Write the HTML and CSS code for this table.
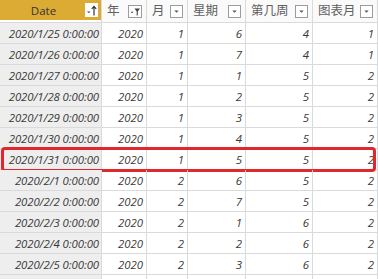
FILE: index.html
```html
<!DOCTYPE html>
<html lang="zh">
<head>
<meta charset="utf-8">
<link rel="stylesheet" href="styles.css">
</head>
<body>
<div class="table">
  <div class="row head">
    <div class="cell hd sel">
      <div class="hd-fill">
        <span class="hd-label">Date</span>
        <svg class="ico sort" width="13" height="14" viewBox="0 0 13 14">
          <rect x="0" y="0" width="13" height="14" fill="#fff"/>
          <path d="M2 8.5 H5.5 L3.75 10 Z" fill="#333"/>
          <path d="M9 12.5 V3.5 M6.8 5.8 L9 3.3 L11.2 5.8" stroke="#333" stroke-width="1.2" fill="none"/>
        </svg>
      </div>
    </div>
    <div class="cell hd"><span class="hd-text">年</span>
      <svg class="ico" width="14" height="13" viewBox="0 0 14 13">
        <rect x="0.5" y="0.5" width="13" height="12" fill="#fff" stroke="#9c9c9c"/>
        <path d="M2.5 6.8 H5.5 L4 8.3 Z" fill="#444"/>
        <path d="M6.5 3.5 H12 L9.8 6.5 V10.2 L8.7 10.8 V6.5 Z" fill="#444"/>
      </svg>
    </div>
    <div class="cell hd"><span class="hd-text">月</span>
      <svg class="ico" width="13" height="13" viewBox="0 0 13 13">
        <rect x="0.5" y="0.5" width="12" height="12" fill="#fff" stroke="#9c9c9c"/>
        <path d="M4.3 5.5 H8.7 L6.5 7.8 Z" fill="#555"/>
      </svg>
    </div>
    <div class="cell hd"><span class="hd-text">星期</span>
      <svg class="ico" width="13" height="13" viewBox="0 0 13 13">
        <rect x="0.5" y="0.5" width="12" height="12" fill="#fff" stroke="#9c9c9c"/>
        <path d="M4.3 5.5 H8.7 L6.5 7.8 Z" fill="#555"/>
      </svg>
    </div>
    <div class="cell hd"><span class="hd-text">第几周</span>
      <svg class="ico" width="13" height="13" viewBox="0 0 13 13">
        <rect x="0.5" y="0.5" width="12" height="12" fill="#fff" stroke="#9c9c9c"/>
        <path d="M4.3 5.5 H8.7 L6.5 7.8 Z" fill="#555"/>
      </svg>
    </div>
    <div class="cell hd"><span class="hd-text">图表月</span>
      <svg class="ico" width="13" height="13" viewBox="0 0 13 13">
        <rect x="0.5" y="0.5" width="12" height="12" fill="#fff" stroke="#9c9c9c"/>
        <path d="M4.3 5.5 H8.7 L6.5 7.8 Z" fill="#555"/>
      </svg>
    </div>
  </div>

  <div class="row"><div class="cell d">2020/1/25 0:00:00</div><div class="cell">2020</div><div class="cell">1</div><div class="cell">6</div><div class="cell">4</div><div class="cell">1</div></div>
  <div class="row"><div class="cell d">2020/1/26 0:00:00</div><div class="cell">2020</div><div class="cell">1</div><div class="cell">7</div><div class="cell">4</div><div class="cell">1</div></div>
  <div class="row"><div class="cell d">2020/1/27 0:00:00</div><div class="cell">2020</div><div class="cell">1</div><div class="cell">1</div><div class="cell">5</div><div class="cell">2</div></div>
  <div class="row"><div class="cell d">2020/1/28 0:00:00</div><div class="cell">2020</div><div class="cell">1</div><div class="cell">2</div><div class="cell">5</div><div class="cell">2</div></div>
  <div class="row"><div class="cell d">2020/1/29 0:00:00</div><div class="cell">2020</div><div class="cell">1</div><div class="cell">3</div><div class="cell">5</div><div class="cell">2</div></div>
  <div class="row"><div class="cell d">2020/1/30 0:00:00</div><div class="cell">2020</div><div class="cell">1</div><div class="cell">4</div><div class="cell">5</div><div class="cell">2</div></div>
  <div class="row hl"><div class="cell d">2020/1/31 0:00:00</div><div class="cell">2020</div><div class="cell">1</div><div class="cell">5</div><div class="cell">5</div><div class="cell">2</div></div>
  <div class="row"><div class="cell d">2020/2/1 0:00:00</div><div class="cell">2020</div><div class="cell">2</div><div class="cell">6</div><div class="cell">5</div><div class="cell">2</div></div>
  <div class="row"><div class="cell d">2020/2/2 0:00:00</div><div class="cell">2020</div><div class="cell">2</div><div class="cell">7</div><div class="cell">5</div><div class="cell">2</div></div>
  <div class="row"><div class="cell d">2020/2/3 0:00:00</div><div class="cell">2020</div><div class="cell">2</div><div class="cell">1</div><div class="cell">6</div><div class="cell">2</div></div>
  <div class="row"><div class="cell d">2020/2/4 0:00:00</div><div class="cell">2020</div><div class="cell">2</div><div class="cell">2</div><div class="cell">6</div><div class="cell">2</div></div>
  <div class="row"><div class="cell d">2020/2/5 0:00:00</div><div class="cell">2020</div><div class="cell">2</div><div class="cell">3</div><div class="cell">6</div><div class="cell">2</div></div>
  <div class="row stub"><div class="cell d"></div><div class="cell"></div><div class="cell"></div><div class="cell"></div><div class="cell"></div><div class="cell"></div></div>
</div>
</body>
</html>
```

FILE: styles.css
```css
html, body {
  margin: 0;
  padding: 0;
  background: #ffffff;
  overflow: hidden;
}

.table {
  width: 378px;
  font-family: "Open Sans", "Noto Sans CJK SC", sans-serif;
}

.row {
  position: relative;
  display: grid;
  grid-template-columns: 102px 45px 41px 58px 67px 65px;
  height: 21px;
}

.row.stub {
  height: 5px;
}

.row.head {
  height: 23px;
  background: #fafafa;
}

.cell {
  box-sizing: border-box;
  border-right: 1px solid #dadada;
  border-bottom: 1px solid #dadada;
  display: flex;
  align-items: center;
  justify-content: flex-end;
  padding-right: 3px;
  font-size: 11.4px;
  font-style: italic;
  color: #383838;
  white-space: nowrap;
}

.row.stub .cell {
  border-bottom: none;
}

.cell.d {
  background: #eeeeee;
  padding-right: 2px;
  letter-spacing: -0.1px;
}

.cell.hd {
  justify-content: space-between;
  padding: 0 4px 0 5px;
  font-style: normal;
  background: #fafafa;
}

.hd-text {
  font-family: "Noto Sans CJK SC", sans-serif;
  font-size: 12.5px;
  color: #606060;
  line-height: 1;
  margin-top: -1px;
}

.cell.hd.sel {
  padding: 0 0 2px 0;
  background: #ffffff;
  align-items: stretch;
}

.hd-fill {
  flex: 1;
  display: flex;
  align-items: center;
  background: #dcab34;
  padding-right: 3px;
}

.hd-label {
  flex: 1;
  text-align: center;
  font-family: "Open Sans", sans-serif;
  font-size: 11.5px;
  color: #333333;
  padding-left: 2px;
}

.ico {
  display: block;
  flex: none;
}

.row.hl::after {
  content: "";
  position: absolute;
  left: 1px;
  right: 2px;
  top: -2px;
  bottom: -2px;
  border: 3px solid #e0282c;
  border-radius: 4px;
  pointer-events: none;
}
```
